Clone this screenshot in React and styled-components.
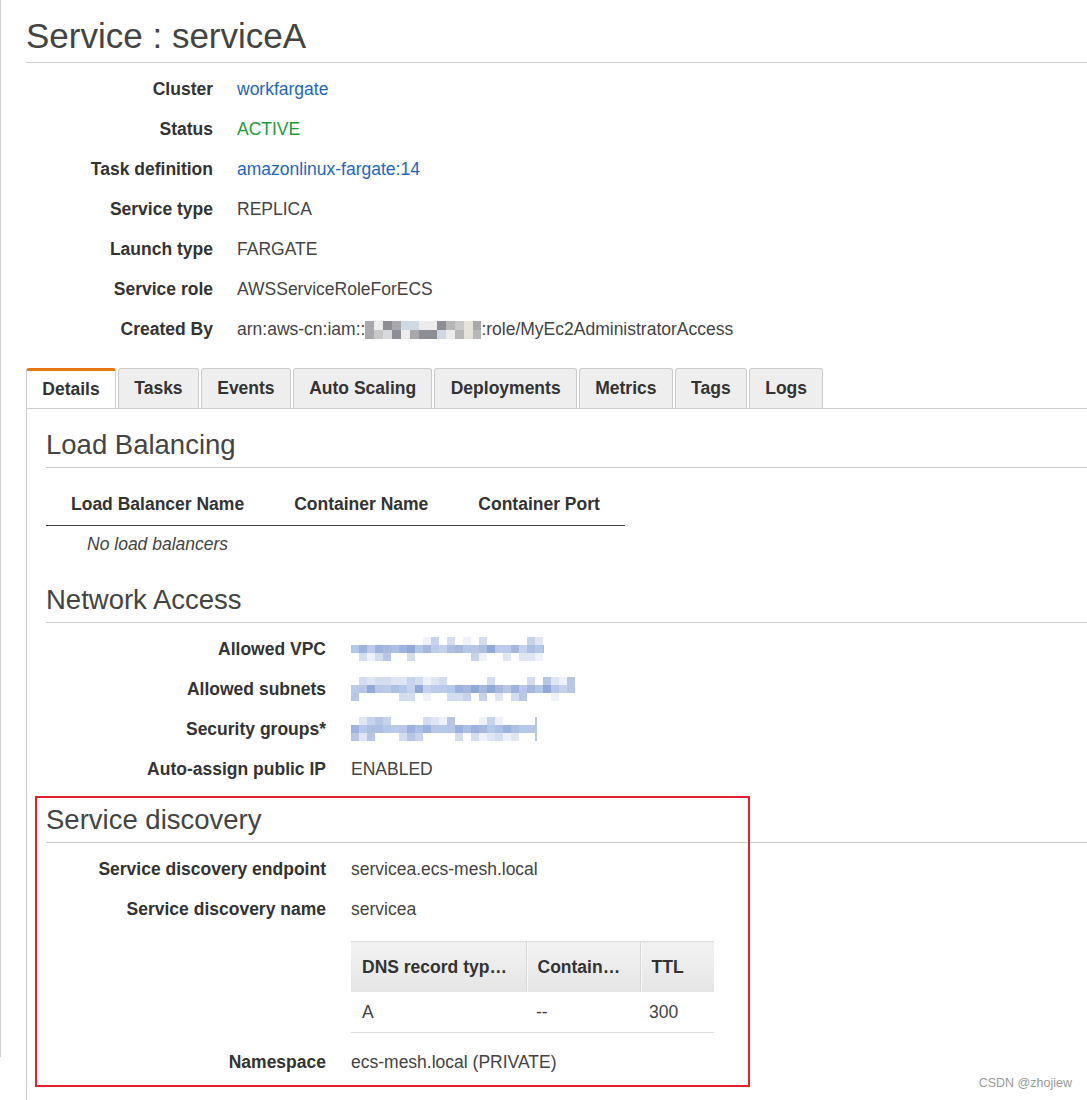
import React from 'react';
import styled, { createGlobalStyle } from 'styled-components';

const GlobalStyle = createGlobalStyle`
  html, body {
    margin: 0;
    padding: 0;
  }
  body {
    background: #fff linear-gradient(#cfcfcf, #cfcfcf) no-repeat 0 0 / 1px 1057px;
    font-family: "Liberation Sans", Arial, sans-serif;
    font-size: 17.5px;
    color: #333;
  }
`;

const Page = styled.div`
  position: relative;
  min-height: 1100px;
  padding-left: 26px;
  box-sizing: border-box;
  overflow: hidden;
`;

const Title = styled.h1`
  margin: 0;
  padding-top: 16px;
  padding-bottom: 6px;
  font-size: 35px;
  line-height: 40px;
  font-weight: 400;
  color: #444;
  border-bottom: 1px solid #ccc;
`;

const KeyValueList = styled.div`
  display: grid;
  grid-template-columns: ${p => p.$labelWidth}px 1fr;
  column-gap: ${p => p.$gap}px;
  margin-top: 6px;
`;

const Label = styled.div`
  padding: 10px 0;
  line-height: 20px;
  font-weight: 700;
  text-align: right;
  color: #333;
  white-space: nowrap;
`;

const Value = styled.div`
  padding: 10px 0;
  line-height: 20px;
  color: #444;
  white-space: nowrap;
  min-width: 0;
`;

const Link = styled.a`
  color: #1f66c1;
  text-decoration: none;
  cursor: pointer;
`;

const Active = styled.span`
  color: #1d9c3b;
`;

const TabBar = styled.div`
  display: flex;
  gap: 2px;
  margin-top: 19px;
`;

const Tab = styled.div`
  box-sizing: border-box;
  height: 40px;
  display: flex;
  align-items: center;
  padding: 0 15.3px;
  font-weight: 700;
  color: #333;
  background: ${p => (p.$active ? '#fff' : '#eee')};
  border: 1px solid #ccc;
  border-top: ${p => (p.$active ? '3px solid #e47911' : '1px solid #ccc')};
  border-bottom: none;
  border-radius: 3px 3px 0 0;
  cursor: pointer;
`;

const TabPanel = styled.div`
  border-top: 1px solid #ccc;
  border-left: 1px solid #ccc;
  padding: 5px 0 40px 19px;
`;

const SectionTitle = styled.h2`
  margin: 0;
  padding: 14px 0 5px;
  font-size: 27.5px;
  line-height: 34px;
  font-weight: 400;
  color: #444;
  border-bottom: 1px solid #ccc;
`;

const LbTable = styled.table`
  border-collapse: collapse;
  margin: 10px 0 7px;

  th {
    padding: 16px 25px 11px;
    line-height: 20px;
    font-weight: 700;
    text-align: left;
    color: #333;
    border-bottom: 1px solid #444;
    white-space: nowrap;
  }
  td {
    padding: 8px 25px;
    line-height: 20px;
    font-style: italic;
    color: #444;
    text-align: center;
  }
`;

const DiscoverySection = styled.div`
  position: relative;
`;

const Highlight = styled.div`
  position: absolute;
  top: 7px;
  bottom: -5px;
  left: -11px;
  width: 715px;
  box-sizing: border-box;
  border: 2px solid #e3202b;
  pointer-events: none;
`;

const TableCell = styled.div`
  padding: 12px 0 9px;
`;

const DnsTable = styled.table`
  border-collapse: collapse;
  width: 363px;
  table-layout: fixed;

  th {
    padding: 15px 11px;
    line-height: 20px;
    font-weight: 700;
    text-align: left;
    color: #333;
    background: linear-gradient(#f2f2f2, #e5e5e5);
    border-top: 1px solid #ddd;
    overflow: hidden;
    white-space: nowrap;
  }
  th + th {
    border-left: 1px solid #d6d6d6;
    box-shadow: inset 1px 0 #fafafa;
  }
  td {
    padding: 10px 11px;
    line-height: 20px;
    color: #444;
    border-bottom: 1px solid #ddd;
  }
  td:nth-child(2) {
    padding-left: 10px;
  }
  td:nth-child(3) {
    padding-left: 9px;
  }
`;

const MosaicSvg = styled.svg`
  display: ${p => (p.$inline ? 'inline-block' : 'block')};
  vertical-align: ${p => (p.$inline ? '-4px' : 'baseline')};
  margin: ${p => (p.$inline ? '0' : '-2px 0')};
`;

const Watermark = styled.div`
  position: absolute;
  top: 1075px;
  right: 15px;
  font-size: 12.5px;
  line-height: 16px;
  color: #999;
`;

const blues = ['#a8b7dd', '#b9c6e6', '#c6d1ec', '#92a8d7', '#aebfe4', '#9db2df', '#bccbe9', '#b4c8e8'];
const blueEdges = ['#dfe5f3', '#c7d2ec', '#eef1f8', '#b8c6e6', '#d4dcef'];
const greys = ['#c9c9c9', '#b7b7b7', '#dadada', '#a9a9ad', '#e6e2dc', '#cfd9e4', '#8d8d94', '#ececec'];

function Mosaic({ width, rows = 3, cell = 8, seed = 1, palette, edges, inline }) {
  let s = seed * 7919;
  const rnd = () => {
    s = (s * 9301 + 49297) % 233280;
    return s / 233280;
  };
  const cols = Math.ceil(width / cell);
  const rects = [];
  for (let c = 0; c < cols; c++) {
    for (let r = 0; r < rows; r++) {
      const middle = rows === 3 ? r === 1 : true;
      if (!middle && rnd() < 0.5) continue;
      const pool = middle ? palette : edges;
      const fill = pool[Math.floor(rnd() * pool.length)];
      rects.push(<rect key={`${c}-${r}`} x={c * cell} y={r * cell} width={cell} height={cell} fill={fill} />);
    }
  }
  return (
    <MosaicSvg $inline={inline} width={width} height={rows * cell} shapeRendering="crispEdges">
      {rects}
    </MosaicSvg>
  );
}

const tabs = ['Details', 'Tasks', 'Events', 'Auto Scaling', 'Deployments', 'Metrics', 'Tags', 'Logs'];

export default function App() {
  return (
    <>
      <GlobalStyle />
      <Page>
        <Title>Service : serviceA</Title>
        <KeyValueList $labelWidth={187} $gap={24}>
          <Label>Cluster</Label>
          <Value><Link>workfargate</Link></Value>
          <Label>Status</Label>
          <Value><Active>ACTIVE</Active></Value>
          <Label>Task definition</Label>
          <Value><Link>amazonlinux-fargate:14</Link></Value>
          <Label>Service type</Label>
          <Value>REPLICA</Value>
          <Label>Launch type</Label>
          <Value>FARGATE</Value>
          <Label>Service role</Label>
          <Value>AWSServiceRoleForECS</Value>
          <Label>Created By</Label>
          <Value>
            arn:aws-cn:iam::
            <Mosaic inline width={116} rows={2} cell={9} seed={3} palette={greys} edges={greys} />
            :role/MyEc2AdministratorAccess
          </Value>
        </KeyValueList>

        <TabBar>
          {tabs.map((t, i) => (
            <Tab key={t} $active={i === 0}>{t}</Tab>
          ))}
        </TabBar>

        <TabPanel>
          <SectionTitle>Load Balancing</SectionTitle>
          <LbTable>
            <thead>
              <tr>
                <th>Load Balancer Name</th>
                <th>Container Name</th>
                <th>Container Port</th>
              </tr>
            </thead>
            <tbody>
              <tr>
                <td>No load balancers</td>
                <td />
                <td />
              </tr>
            </tbody>
          </LbTable>

          <SectionTitle>Network Access</SectionTitle>
          <KeyValueList $labelWidth={280} $gap={25}>
            <Label>Allowed VPC</Label>
            <Value><Mosaic width={193} seed={11} palette={blues} edges={blueEdges} /></Value>
            <Label>Allowed subnets</Label>
            <Value><Mosaic width={224} seed={23} palette={blues} edges={blueEdges} /></Value>
            <Label>Security groups*</Label>
            <Value><Mosaic width={186} seed={37} palette={blues} edges={blueEdges} /></Value>
            <Label>Auto-assign public IP</Label>
            <Value>ENABLED</Value>
          </KeyValueList>

          <DiscoverySection>
            <Highlight />
            <SectionTitle>Service discovery</SectionTitle>
            <KeyValueList $labelWidth={280} $gap={25}>
              <Label>Service discovery endpoint</Label>
              <Value>servicea.ecs-mesh.local</Value>
              <Label>Service discovery name</Label>
              <Value>servicea</Value>
              <div />
              <TableCell>
                <DnsTable>
                  <colgroup>
                    <col style={{ width: 175 }} />
                    <col style={{ width: 114 }} />
                    <col style={{ width: 74 }} />
                  </colgroup>
                  <thead>
                    <tr>
                      <th>DNS record typ…</th>
                      <th>Contain…</th>
                      <th>TTL</th>
                    </tr>
                  </thead>
                  <tbody>
                    <tr>
                      <td>A</td>
                      <td>--</td>
                      <td>300</td>
                    </tr>
                  </tbody>
                </DnsTable>
              </TableCell>
              <Label>Namespace</Label>
              <Value>ecs-mesh.local (PRIVATE)</Value>
            </KeyValueList>
          </DiscoverySection>
        </TabPanel>

        <Watermark>CSDN @zhojiew</Watermark>
      </Page>
    </>
  );
}
